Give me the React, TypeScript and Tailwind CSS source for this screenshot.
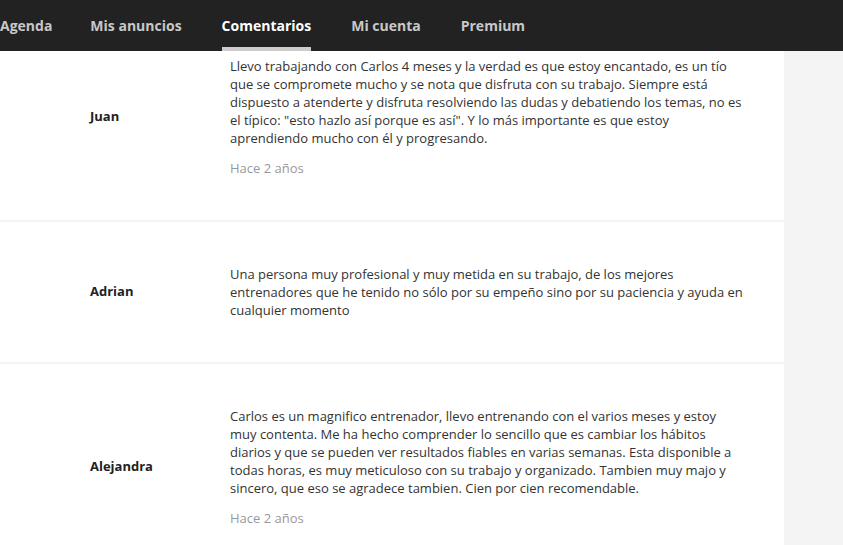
import React from 'react';

const tabs = ["Agenda", "Mis anuncios", "Comentarios", "Mi cuenta", "Premium"];

const comments = [
    {
        name: "Juan",
        text: "Llevo trabajando con Carlos 4 meses y la verdad es que estoy encantado, es un tío que se compromete mucho y se nota que disfruta con su trabajo. Siempre está dispuesto a atenderte y disfruta resolviendo las dudas y debatiendo los temas, no es el típico: \"esto hazlo así porque es así\". Y lo más importante es que estoy aprendiendo mucho con él y progresando.",
        date: "Hace 2 años",
    },
    {
        name: "Adrian",
        text: "Una persona muy profesional y muy metida en su trabajo, de los mejores entrenadores que he tenido no sólo por su empeño sino por su paciencia y ayuda en cualquier momento",
        date: "",
    },
    {
        name: "Alejandra",
        text: "Carlos es un magnifico entrenador, llevo entrenando con el varios meses y estoy muy contenta. Me ha hecho comprender lo sencillo que es cambiar los hábitos diarios y que se pueden ver resultados fiables en varias semanas. Esta disponible a todas horas, es muy meticuloso con su trabajo y organizado. Tambien muy majo y sincero, que eso se agradece tambien. Cien por cien recomendable.",
        date: "Hace 2 años",
    },
];

const App = () => {
    return (
        <div className="min-h-screen bg-[#f4f4f4] font-['Open_Sans',sans-serif] text-[#333]">
            {/* fixed top nav, content scrolls under it */}
            <nav className="fixed top-0 left-0 right-0 z-10 h-[51px] bg-[#222] overflow-hidden">
                <ul className="flex h-full ml-[-20px] pb-[1px]">
                    {tabs.map((tab, i) => (
                        <li
                            key={tab}
                            className={`relative flex items-center px-5 text-[14px] font-bold ${i === 0 ? "pr-[18px]" : ""} ${tab === "Comentarios" ? "text-white" : "text-[#c8c8c8]"}`}
                        >
                            {tab}
                            {tab === "Comentarios" && (
                                <span className="absolute left-5 right-5 bottom-[-1px] h-[4px] bg-[#ccc]" />
                            )}
                        </li>
                    ))}
                </ul>
            </nav>

            <div className="w-[784px] bg-white pt-[14px]">
                {comments.map((c, i) => (
                    <div
                        key={c.name}
                        className={`flex items-center py-[43px] ${i > 0 ? "border-t-2 border-[#f4f4f4]" : ""}`}
                    >
                        <div className="w-[230px] shrink-0 pl-[90px] text-[13px] font-bold text-[#222]">
                            {c.name}
                        </div>
                        <div className="w-[515px] text-[13px] leading-[18px]">
                            <p>{c.text}</p>
                            {c.date && <p className="mt-3 text-[#999]">{c.date}</p>}
                        </div>
                    </div>
                ))}
            </div>
        </div>
    );
};

export default App;
